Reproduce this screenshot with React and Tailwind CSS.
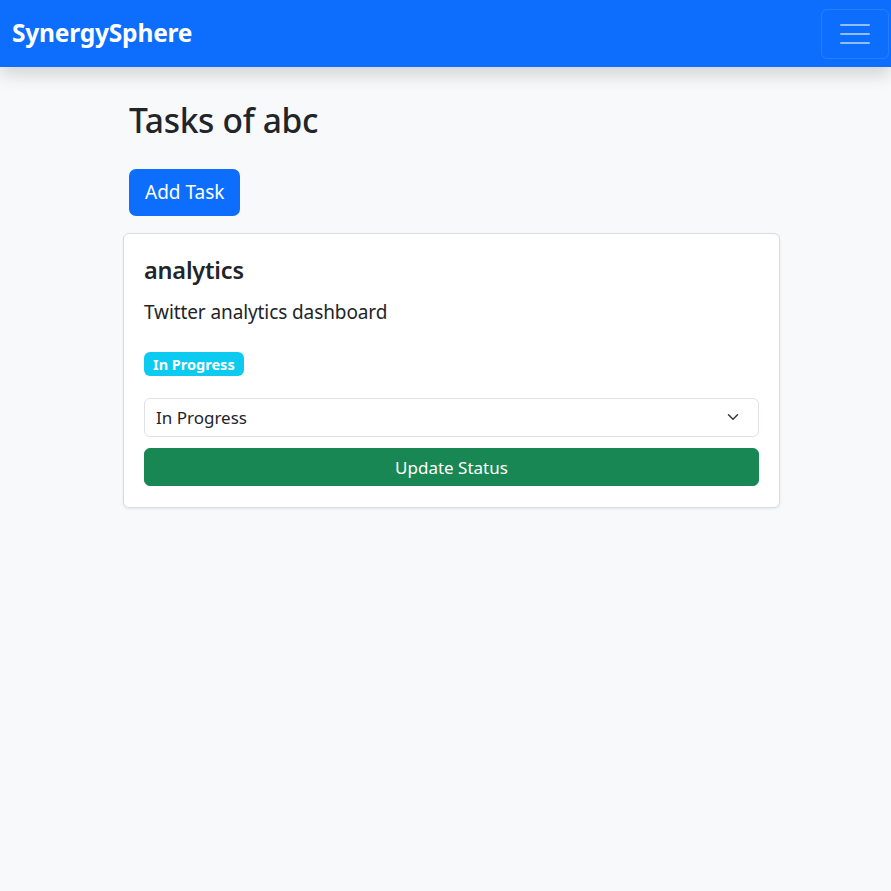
import React, { useState } from 'react';

const font = { fontFamily: '"Noto Sans", "Open Sans", "Liberation Sans", sans-serif' };

const Navbar = () => (
  <nav className="h-[67px] bg-[#0d6efd] flex items-center justify-between pl-[12px] pr-[2px] shadow-[0_8px_16px_rgba(0,0,0,0.15)] relative z-10">
    <span className="text-white font-bold text-[24.5px] tracking-[-0.2px]">SynergySphere</span>
    <button className="w-[68px] h-[50px] rounded-[6px] border border-white/10 flex flex-col items-center justify-center gap-[7px]">
      <span className="block w-[30px] h-[2px] rounded bg-white/55" />
      <span className="block w-[30px] h-[2px] rounded bg-white/55" />
      <span className="block w-[30px] h-[2px] rounded bg-white/55" />
    </button>
  </nav>
);

const TaskCard = () => {
  const [status, setStatus] = useState('In Progress');

  return (
    <div className="w-[657px] bg-white border border-[#dadde0] rounded-[6px] shadow-[0_1px_3px_rgba(0,0,0,0.08)] px-[20px] pt-[22px] pb-[21px]">
      <h5 className="text-[23.5px] font-semibold leading-[1.2] text-[#212529] tracking-[-0.2px]">analytics</h5>
      <p className="mt-[14px] text-[19px] text-[#212529] tracking-[-0.1px]">Twitter analytics dashboard</p>
      <span className="inline-block mt-[25px] bg-[#0dcaf0] text-white text-[14.5px] font-bold leading-none px-[9px] py-[5px] rounded-[6px]">
        In Progress
      </span>
      <div className="relative mt-[22px]">
        <select
          value={status}
          onChange={e => setStatus(e.target.value)}
          className="appearance-none w-full h-[39px] border border-[#dee2e6] rounded-[6px] pl-[11px] text-[17px] text-[#212529] bg-white outline-none"
          style={font}
        >
          <option>To Do</option>
          <option>In Progress</option>
          <option>Done</option>
        </select>
        <svg
          className="absolute right-[18px] top-[13px] pointer-events-none"
          width="16"
          height="12"
          viewBox="0 0 16 16"
          fill="none"
          stroke="#343a40"
          strokeWidth="2"
          strokeLinecap="round"
          strokeLinejoin="round"
        >
          <path d="m2 5 6 6 6-6" />
        </svg>
      </div>
      <button
        className="mt-[11px] w-full h-[38px] bg-[#198754] text-white text-[17px] rounded-[6px] border border-[#198754]"
        style={font}
      >
        Update Status
      </button>
    </div>
  );
};

const App = () => (
  <div className="min-h-[891px] bg-[#f8f9fa] text-[#212529]" style={font}>
    <Navbar />
    <main className="pl-[123px] pt-[33px]">
      <div className="pl-[6px]">
        <h1 className="text-[33.5px] font-medium leading-[1.2] tracking-[-0.3px]">Tasks of abc</h1>
        <button className="mt-[29px] h-[47px] px-[16px] bg-[#0d6efd] text-white text-[19px] rounded-[7px]" style={font}>
          Add Task
        </button>
      </div>
      <div className="mt-[17px]">
        <TaskCard />
      </div>
    </main>
  </div>
);

export default App;
